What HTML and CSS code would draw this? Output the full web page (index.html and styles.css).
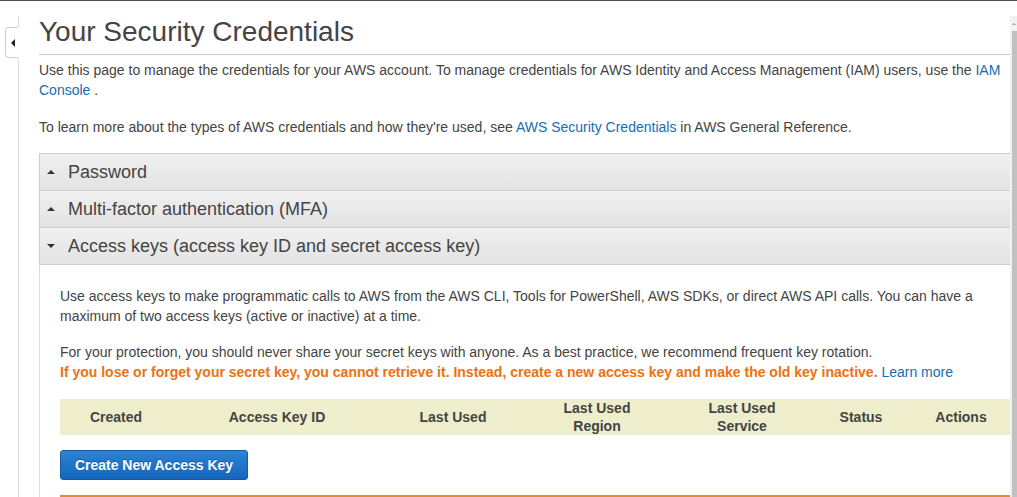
FILE: index.html
```html
<!DOCTYPE html>
<html lang="en">
<head>
<meta charset="utf-8">
<title>Your Security Credentials</title>
<link rel="stylesheet" href="styles.css">
</head>
<body>
<div class="topline"></div>
<div class="frame">
  <div class="sidebar">
    <div class="side-line side-line-top"></div>
    <div class="side-tab"><span class="tab-arrow"></span></div>
    <div class="side-line side-line-fill"></div>
  </div>
  <main class="main">
    <h1 class="title">Your Security Credentials</h1>
    <p class="intro">Use this page to manage the credentials for your AWS account. To manage credentials for AWS Identity and Access Management (IAM) users, use the <a href="#" class="link">IAM</a> <a href="#" class="link">Console</a> .</p>
    <p class="intro intro-second">To learn more about the types of AWS credentials and how they're used, see <a href="#" class="link">AWS Security Credentials</a> in AWS General Reference.</p>

    <section class="accordion">
      <div class="acc-header"><span class="caret caret-up"></span><span class="acc-title">Password</span></div>
      <div class="acc-header"><span class="caret caret-up"></span><span class="acc-title">Multi-factor authentication (MFA)</span></div>
      <div class="acc-header acc-open"><span class="caret caret-down"></span><span class="acc-title">Access keys (access key ID and secret access key)</span></div>
      <div class="acc-body">
        <p class="body-text">Use access keys to make programmatic calls to AWS from the AWS CLI, Tools for PowerShell, AWS SDKs, or direct AWS API calls. You can have a maximum of two access keys (active or inactive) at a time.</p>
        <p class="body-text body-second">For your protection, you should never share your secret keys with anyone. As a best practice, we recommend frequent key rotation.<br><strong class="warn">If you lose or forget your secret key, you cannot retrieve it. Instead, create a new access key and make the old key inactive.</strong> <a href="#" class="link">Learn more</a></p>
        <table class="keys">
          <colgroup>
            <col class="c-created"><col class="c-id"><col class="c-used"><col class="c-region"><col class="c-service"><col class="c-status"><col class="c-actions">
          </colgroup>
          <thead>
            <tr>
              <th>Created</th>
              <th>Access Key ID</th>
              <th>Last Used</th>
              <th>Last Used<br>Region</th>
              <th>Last Used<br>Service</th>
              <th>Status</th>
              <th>Actions</th>
            </tr>
          </thead>
        </table>
        <button class="btn-primary" type="button">Create New Access Key</button>
        <div class="orange-box"></div>
      </div>
    </section>
  </main>
  <div class="scrollbar">
    <div class="scroll-up"><span class="scroll-arrow"></span></div>
    <div class="scroll-thumb"></div>
  </div>
</div>
</body>
</html>
```
FILE: styles.css
```css
html, body {
  margin: 0;
  padding: 0;
  height: 100%;
  overflow: hidden;
  background: #fff;
}
body {
  font-family: "Liberation Sans", Arial, sans-serif;
  color: #444;
  font-size: 14px;
}
.topline {
  height: 1px;
  background: #4a4f55;
}
.frame {
  display: flex;
  height: calc(100% - 1px);
  padding-top: 15px;
  box-sizing: border-box;
}
.sidebar {
  width: 19px;
  flex: none;
  display: flex;
  flex-direction: column;
  align-items: flex-end;
}
.side-line {
  width: 1px;
  background: #dcdcdc;
}
.side-line-top { height: 11px; }
.side-line-fill { flex: 1; }
.side-tab {
  width: 12px;
  height: 29px;
  margin-right: 1px;
  border: 1px solid #cfcfcf;
  border-right: none;
  border-radius: 4px 0 0 4px;
  background: #fff;
  display: flex;
  align-items: center;
  justify-content: center;
}
.tab-arrow {
  width: 0;
  height: 0;
  border-top: 4px solid transparent;
  border-bottom: 4px solid transparent;
  border-right: 4px solid #222;
  margin-left: 1px;
}
.main {
  flex: 1;
  min-width: 0;
  margin-left: 20px;
  overflow: hidden;
}
.title {
  margin: 0;
  font-size: 28px;
  font-weight: normal;
  line-height: 32px;
  color: #444;
  padding-bottom: 6px;
  border-bottom: 1px solid #cccccc;
}
.intro {
  margin: 5px 0 0;
  line-height: 20px;
}
.intro-second {
  margin-top: 17px;
}
.link {
  color: #146eb4;
  text-decoration: none;
}
.accordion {
  margin-top: 16px;
}
.acc-header {
  height: 36px;
  border-top: 1px solid #cccccc;
  border-left: 1px solid #cccccc;
  background: linear-gradient(#f0f0f0, #e3e3e3);
  display: flex;
  align-items: center;
  padding-left: 7px;
  font-size: 18px;
  color: #444;
}
.acc-open {
  border-bottom: 1px solid #cccccc;
}
.caret {
  width: 0;
  height: 0;
  border-left: 4px solid transparent;
  border-right: 4px solid transparent;
  margin-right: 13px;
}
.caret-up { border-bottom: 4px solid #333; }
.caret-down { border-top: 4px solid #333; }
.acc-body {
  border-left: 1px solid #dddddd;
  padding: 21px 0 0 20px;
}
.body-text {
  margin: 0;
  line-height: 20px;
}
.body-second {
  margin-top: 16px;
}
.warn {
  color: #ec7211;
  font-weight: bold;
}
.keys {
  margin-top: 17px;
  width: 954px;
  table-layout: fixed;
  border-collapse: collapse;
  background: #eeeecc;
}
.keys th {
  height: 36px;
  padding: 0;
  font-weight: bold;
  font-size: 14px;
  line-height: 18px;
  color: #444;
  text-align: center;
}
.c-created { width: 112px; }
.c-id { width: 210px; }
.c-used { width: 142px; }
.c-region { width: 146px; }
.c-service { width: 144px; }
.c-status { width: 94px; }
.c-actions { width: 106px; }
.btn-primary {
  display: block;
  margin-top: 15px;
  height: 30px;
  width: 188px;
  padding: 0;
  border: 1px solid #1559a4;
  border-radius: 3px;
  background: linear-gradient(#2d83d6, #1466b9);
  color: #fff;
  font-family: "Liberation Sans", Arial, sans-serif;
  font-weight: bold;
  font-size: 14px;
  text-shadow: 0 -1px 0 rgba(0, 0, 0, 0.3);
}
.orange-box {
  margin-top: 15px;
  height: 40px;
  border-top: 2px solid #e88a2e;
}
.scrollbar {
  width: 7px;
  flex: none;
  display: flex;
  flex-direction: column;
  background: #f1f1f1;
}
.scroll-up {
  height: 15px;
  display: flex;
  align-items: center;
  justify-content: center;
}
.scroll-arrow {
  width: 0;
  height: 0;
  border-left: 2px solid transparent;
  border-right: 2px solid transparent;
  border-bottom: 2px solid #a3a3a3;
}
.scroll-thumb {
  flex: 1;
  margin-left: 2px;
  background: #c1c1c1;
}
```
